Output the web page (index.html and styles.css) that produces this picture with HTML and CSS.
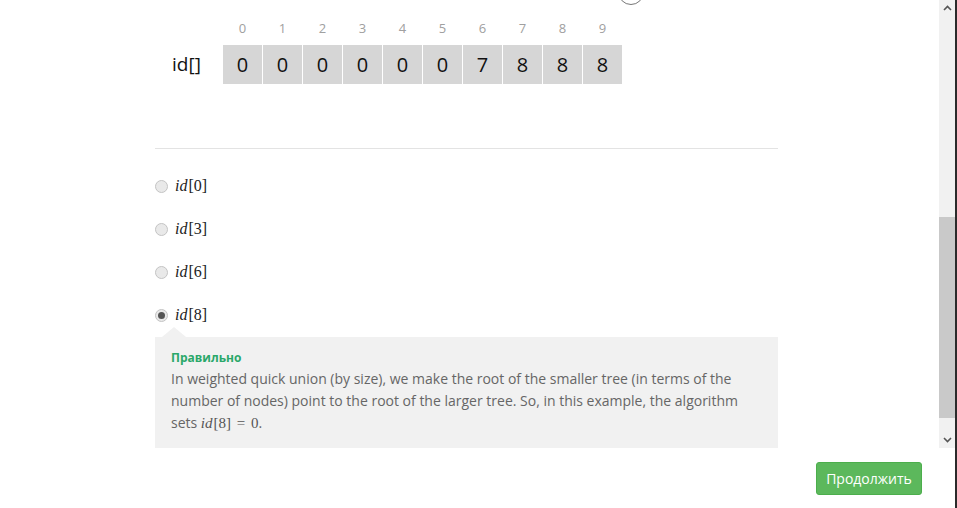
FILE: index.html
```html
<!DOCTYPE html>
<html>
<head>
<meta charset="utf-8">
<link rel="stylesheet" href="styles.css">
</head>
<body>
<div class="window">
  <main class="page">
    <div class="content">
      <div class="figure">
        <span class="node-circle"></span>
        <div class="array">
          <div class="label-spacer"></div>
          <div class="idx">0</div><div class="idx">1</div><div class="idx">2</div><div class="idx">3</div><div class="idx">4</div><div class="idx">5</div><div class="idx">6</div><div class="idx">7</div><div class="idx">8</div><div class="idx">9</div>
          <div class="arr-label">id[]</div>
          <div class="cell">0</div><div class="cell">0</div><div class="cell">0</div><div class="cell">0</div><div class="cell">0</div><div class="cell">0</div><div class="cell">7</div><div class="cell">8</div><div class="cell">8</div><div class="cell">8</div>
        </div>
      </div>
      <hr class="sep">
      <div class="options">
        <div class="option"><span class="radio"></span><span class="math"><i>id</i>[0]</span></div>
        <div class="option"><span class="radio"></span><span class="math"><i>id</i>[3]</span></div>
        <div class="option"><span class="radio"></span><span class="math"><i>id</i>[6]</span></div>
        <div class="option"><span class="radio checked"></span><span class="math"><i>id</i>[8]</span></div>
      </div>
      <div class="feedback">
        <div class="verdict">Правильно</div>
        <p class="explain">In weighted quick union (by size), we make the root of the smaller tree (in terms of the number of nodes) point to the root of the larger tree. So, in this example, the algorithm sets <span class="math inline"><i>id</i>[8] = 0</span>.</p>
      </div>
    </div>
    <div class="actions">
      <button class="continue">Продолжить</button>
    </div>
  </main>
  <div class="scrollbar">
    <div class="track">
      <div class="arrow up"><svg width="9" height="6" viewBox="0 0 9 6"><path d="M1 5 L4.5 1.5 L8 5" fill="none" stroke="#555" stroke-width="1.6"/></svg></div>
      <div class="gap-top"></div>
      <div class="thumb"></div>
      <div class="gap-bottom"></div>
      <div class="arrow down"><svg width="9" height="6" viewBox="0 0 9 6"><path d="M1 1 L4.5 4.5 L8 1" fill="none" stroke="#555" stroke-width="1.6"/></svg></div>
    </div>
  </div>
  <div class="edge"></div>
</div>
</body>
</html>
```
FILE: styles.css
```css
* { box-sizing: border-box; }
html, body { margin: 0; padding: 0; background: #fff; }
body { width: 957px; height: 508px; overflow: hidden; font-family: "Open Sans", "Liberation Sans", sans-serif; }

.window { display: flex; width: 957px; height: 508px; }
.page { flex: 1; display: flex; flex-direction: column; }
.content { margin-left: 155px; width: 623px; }

.figure { position: relative; height: 148px; padding-left: 17px; padding-top: 19px; }
.node-circle { position: absolute; left: 463px; top: -21px; width: 26px; height: 26px; border: 1.5px solid #777; border-radius: 50%; }

.array { display: grid; grid-template-columns: 50px repeat(10, 39px); column-gap: 1px; row-gap: 8px; grid-template-rows: 18px 39px; }
.idx { text-align: center; color: #a0a0a0; font-size: 13px; line-height: 18px; font-family: "Open Sans", sans-serif; }
.arr-label { font-size: 19px; line-height: 39px; color: #111; font-family: "Open Sans", sans-serif; }
.cell { background: #d6d6d6; text-align: center; font-size: 20px; line-height: 39px; color: #111; font-family: "Open Sans", sans-serif; }

.sep { margin: 0; border: 0; border-top: 1px solid #e3e3e3; }

.options { padding-top: 26px; display: flex; flex-direction: column; gap: 21px; }
.option { display: flex; align-items: center; height: 22px; }
.radio { width: 13px; height: 13px; border-radius: 50%; border: 1px solid #c4c4c4; background: #e9e9e9; margin-right: 7px; display: flex; align-items: center; justify-content: center; }
.radio.checked::after { content: ""; width: 7px; height: 7px; border-radius: 50%; background: #555; }
.math { font-family: "Liberation Serif", serif; font-size: 16px; color: #222; }
.math i { font-style: italic; padding-right: 1px; }

.feedback { position: relative; margin-top: 11px; background: #f1f1f1; padding: 13px 16px 14px 16px; }
.feedback::before { content: ""; position: absolute; left: 7px; top: -10px; border-left: 12px solid transparent; border-right: 12px solid transparent; border-bottom: 10px solid #f1f1f1; }
.verdict { color: #2aa86a; font-weight: bold; font-size: 12px; line-height: 16px; }
.explain { margin: 2px 0 0 0; color: #666; font-size: 14px; line-height: 22px; }
.explain .math.inline { display: inline-block; font-size: 15px; color: #555; line-height: 20px; word-spacing: 2px; }

.actions { display: flex; justify-content: flex-end; padding-right: 17px; margin-top: 14px; }
.continue { width: 106px; height: 33px; background: #5cb85c; border: 1px solid #4cae4c; border-radius: 3px; color: #fff; font-family: "Open Sans", sans-serif; font-size: 14px; padding: 0; }

.scrollbar { width: 16px; background: #fff; }
.track { height: 448px; background: #f1f1f1; display: flex; flex-direction: column; }
.arrow { height: 16px; display: flex; align-items: center; justify-content: center; }
.gap-top { height: 201px; }
.thumb { height: 201px; background: #c9c9c9; }
.gap-bottom { flex: 1; }
.edge { width: 2px; background: #2b2b2b; }
```
